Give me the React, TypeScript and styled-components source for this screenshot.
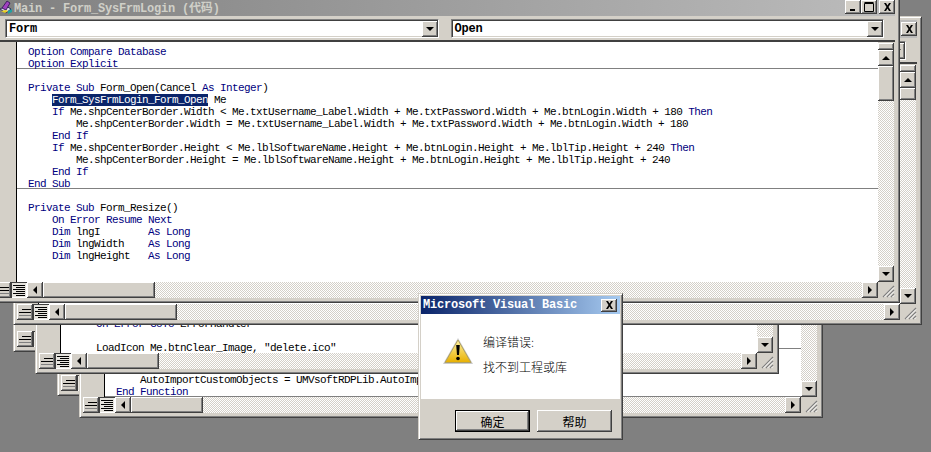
import React from 'react'
import styled, { createGlobalStyle, css } from 'styled-components'

const FACE = '#d4d0c8'
const NAVY = '#000080'
const MONO = `"Liberation Mono", "Noto Sans CJK SC", monospace`

const GlobalStyle = createGlobalStyle`
  html, body { margin: 0; padding: 0; background: #808080; }
  #root { width: 931px; height: 452px; overflow: hidden; }
`

const raised = css`
  background: ${FACE};
  box-shadow: inset -1px -1px #404040, inset 1px 1px #fff, inset -2px -2px #808080;
`
const hatch = css`
  background: repeating-conic-gradient(${FACE} 0 25%, #fff 0 50%) 0 0 / 2px 2px;
`

const Desktop = styled.div`
  position: relative;
  width: 931px;
  height: 452px;
  overflow: hidden;
  background: #808080;
`

const Win = styled.div<{ $left: number; $top: number; $width: number }>`
  position: absolute;
  left: ${p => p.$left}px;
  top: ${p => p.$top}px;
  width: ${p => p.$width}px;
  height: 309px;
  box-sizing: border-box;
  display: flex;
  flex-direction: column;
  padding: 3px 4px 4px 3px;
  background: ${FACE};
  border: 1px solid;
  border-color: ${FACE} #404040 #404040 ${FACE};
  box-shadow: inset 1px 1px #fff, inset -1px -1px #808080;
`

const TitleBar = styled.div`
  height: 18px;
  flex: none;
  display: flex;
  align-items: center;
  background: linear-gradient(90deg, #808080, #bcbcbc);
`
const TitleIcon = styled.svg`
  width: 14px;
  height: 15px;
  margin: 0 1px 0 4px;
  flex: none;
`
const TitleText = styled.span`
  flex: 1;
  font: bold 12px ${MONO};
  letter-spacing: -0.2px;
  color: #d0d0c8;
  white-space: pre;
  overflow: hidden;
`
const CapButton = styled.div<{ $gap?: number }>`
  ${raised}
  width: 16px;
  height: 14px;
  flex: none;
  margin-left: ${p => p.$gap ?? 0}px;
  display: flex;
  align-items: center;
  justify-content: center;
`

const ComboRow = styled.div`
  height: 26px;
  flex: none;
  box-sizing: border-box;
  padding: 3px 11px 0 10px;
  display: grid;
  grid-template-columns: 1fr 1fr;
  gap: 12px;
  align-items: start;
  border-bottom: 2px solid #404040;
`
const Combo = styled.div`
  height: 19px;
  box-sizing: border-box;
  display: flex;
  align-items: center;
  background: #fff;
  border: 1px solid;
  border-color: #808080 #fff #fff #808080;
  box-shadow: inset 1px 1px #404040, inset -1px -1px ${FACE};
`
const ComboText = styled.span`
  flex: 1;
  padding-left: 3px;
  font: bold 12px ${MONO};
  letter-spacing: -0.2px;
  color: #000;
`

const Pane = styled.div`
  flex: 1;
  min-height: 0;
  display: flex;
`
const Gutter = styled.div`
  width: 21px;
  flex: none;
  background: ${FACE};
  border-right: 1px solid #000;
`
const Code = styled.div<{ $end?: boolean }>`
  flex: 1;
  min-width: 0;
  overflow: hidden;
  box-sizing: border-box;
  padding-top: 3px;
  background: #fff;
  display: flex;
  flex-direction: column;
  justify-content: ${p => (p.$end ? 'flex-end' : 'flex-start')};
`
const Line = styled.div<{ $sep?: boolean }>`
  height: 12px;
  flex: none;
  box-sizing: border-box;
  padding-left: 11px;
  font: 11px/14px ${MONO};
  letter-spacing: -0.6px;
  color: #000;
  white-space: pre;
  ${p => p.$sep && 'border-bottom: 1px solid #808080;'}
`
const Keyword = styled.span`
  color: ${NAVY};
`
const Selected = styled.span`
  background: #0a246a;
  color: #fff;
`

const VBar = styled.div`
  width: 17px;
  flex: none;
  display: flex;
  flex-direction: column;
  padding-top: 1px;
  box-sizing: border-box;
  background: ${FACE};
`
const Splitter = styled.div`
  ${raised}
  width: 16px;
  height: 7px;
  flex: none;
`
const Thumb = styled.div<{ $h?: number; $w?: number }>`
  ${raised}
  flex: none;
  width: ${p => p.$w ?? 16}px;
  height: ${p => p.$h ?? 16}px;
`
const Track = styled.div`
  ${hatch}
  flex: 1;
`
const VTrack = styled(Track)`
  width: 16px;
`

const HBar = styled.div`
  height: 16px;
  flex: none;
  display: flex;
`
const ViewButton = styled.div<{ $pressed?: boolean }>`
  flex: none;
  width: 16px;
  height: 16px;
  display: flex;
  align-items: center;
  justify-content: center;
  ${p =>
    p.$pressed
      ? css`
          background: #e6e4de;
          box-shadow: inset 1px 1px #404040, inset -1px -1px #fff;
        `
      : raised}
`
const ArrowButton = styled.div`
  ${raised}
  flex: none;
  width: 16px;
  height: 16px;
  display: flex;
  align-items: center;
  justify-content: center;
`
const Triangle = styled.i<{ $dir: 'up' | 'down' | 'left' | 'right' }>`
  width: 0;
  height: 0;
  border-style: solid;
  ${p => p.$dir === 'up' && 'border-width: 0 4px 4px; border-color: transparent transparent #000;'}
  ${p => p.$dir === 'down' && 'border-width: 4px 4px 0; border-color: #000 transparent transparent;'}
  ${p => p.$dir === 'left' && 'border-width: 4px 4px 4px 0; border-color: transparent #000 transparent transparent;'}
  ${p => p.$dir === 'right' && 'border-width: 4px 0 4px 4px; border-color: transparent transparent transparent #000;'}
`
const Corner = styled.div`
  width: 17px;
  flex: none;
  display: flex;
  align-items: flex-end;
  justify-content: flex-end;
  background: ${FACE};
`

// dialog
const Dialog = styled.div`
  position: absolute;
  left: 418px;
  top: 293px;
  width: 205px;
  height: 147px;
  box-sizing: border-box;
  padding: 2px;
  display: flex;
  flex-direction: column;
  background: ${FACE};
  border: 1px solid;
  border-color: ${FACE} #404040 #404040 ${FACE};
  box-shadow: inset 1px 1px #fff, inset -1px -1px #808080;
`
const DialogTitle = styled.div`
  height: 18px;
  flex: none;
  display: flex;
  align-items: center;
  justify-content: space-between;
  padding: 0 3px 0 2px;
  background: linear-gradient(90deg, #0a246a, #a6caf0);
  font: bold 12px ${MONO};
  letter-spacing: -0.2px;
  color: #fff;
`
const DialogClose = styled(CapButton)`
  height: 13px;
`
const DialogBody = styled.div`
  height: 85px;
  flex: none;
  display: flex;
  background: #fff;
  padding: 22px 0 0 21px;
  box-sizing: border-box;
`
const WarnIcon = styled.svg`
  width: 32px;
  height: 32px;
  flex: none;
  margin-right: 9px;
`
const Message = styled.div`
  display: flex;
  flex-direction: column;
  gap: 13px;
  font: 300 12px/12px "Noto Sans CJK SC", sans-serif;
  color: #000;
`
const DialogFooter = styled.div`
  flex: 1;
  display: flex;
  justify-content: flex-end;
  align-items: flex-start;
  gap: 7px;
  padding: 11px 8px 0 0;
`
const PushButton = styled.div<{ $default?: boolean }>`
  ${raised}
  width: 75px;
  height: 22px;
  box-sizing: border-box;
  display: flex;
  align-items: center;
  justify-content: center;
  font: 12px "Noto Sans CJK SC", sans-serif;
  color: #000;
  ${p => p.$default && 'border: 1px solid #000;'}
`

const KEYWORDS = /\b(Option|Compare|Database|Explicit|Private|Public|Sub|Function|As|Integer|Long|If|Then|End|On|Error|GoTo|Resume|Next|Dim)\b/
const SELECTION = 'Form_SysFrmLogin_Form_Open'

type CodeLine = { text: string; sep?: boolean }

const CodeText: React.FC<{ text: string }> = ({ text }) => {
  const sel = text.indexOf(SELECTION)
  if (sel >= 0) {
    return (
      <>
        {text.slice(0, sel)}
        <Selected>{SELECTION}</Selected>
        {text.slice(sel + SELECTION.length)}
      </>
    )
  }
  return (
    <>
      {text.split(KEYWORDS).map((part, i) => (i % 2 ? <Keyword key={i}>{part}</Keyword> : part))}
    </>
  )
}

const Close: React.FC = () => (
  <svg width="9" height="8" viewBox="0 0 9 8">
    <path d="M1 0h2l1.500 2.500L6 0h2L5.500 4 8 8H6L4.500 5.500 3 8H1l2.500-4z" fill="#000" />
  </svg>
)

const ProcIcon: React.FC = () => (
  <svg width="12" height="10" viewBox="0 0 12 10">
    <path d="M3 2.500h9M0 5.500h12" stroke="#000" fill="none" />
    <path d="M0 8.500h12" stroke="#808080" fill="none" />
  </svg>
)

const ModuleIcon: React.FC = () => (
  <svg width="12" height="11" viewBox="0 0 12 11">
    <path d="M0 .500h12M3 2.500h9M0 4.500h12M3 6.500h9M0 8.500h12M3 10.500h9" stroke="#000" fill="none" />
  </svg>
)

const Grip: React.FC = () => (
  <svg width="13" height="13" viewBox="0 0 13 13">
    <path d="M12 1 1 12M12 5 5 12M12 9 9 12" stroke="#808080" strokeWidth="1.200" fill="none" />
    <path d="M12 2.500 2.500 12M12 6.500 6.500 12M12 10.500 10.500 12" stroke="#fff" fill="none" />
  </svg>
)

type WindowProps = {
  left: number
  top: number
  width: number
  lines: CodeLine[]
  title?: string
  thumb?: number
  hthumb?: number
  left_combo?: string
  right_combo?: string
  end?: boolean
}

const CodeWindow: React.FC<WindowProps> = ({ left, top, width, lines, title = '', thumb = 35, hthumb = 112, left_combo = '', right_combo = '', end }) => (
  <Win $left={left} $top={top} $width={width}>
    <TitleBar>
      <TitleIcon viewBox="0 0 14 15">
        <path d="M1 9l6-3 5 3-5 4z" fill="#d8d8e8" stroke="#303060" />
        <path d="M3 8l5-7 3 2-4 7z" fill="#a040c0" stroke="#402060" />
        <path d="M2 11l4 2 3-2-2-1z" fill="#e8d020" />
        <path d="M9 11l4-2v3l-4 2z" fill="#20a0a0" />
      </TitleIcon>
      <TitleText>{title}</TitleText>
      <CapButton>
        <svg width="8" height="8" viewBox="0 0 8 8"><path d="M1 6h5v2H1z" fill="#000" /></svg>
      </CapButton>
      <CapButton>
        <svg width="10" height="10" viewBox="0 0 10 10"><path d="M.5 1.500h9v8h-9z M.5 .500h9" stroke="#000" fill="none" /></svg>
      </CapButton>
      <CapButton $gap={2}>
        <Close />
      </CapButton>
    </TitleBar>
    <ComboRow>
      <Combo>
        <ComboText>{left_combo}</ComboText>
        <ArrowButton><Triangle $dir="down" /></ArrowButton>
      </Combo>
      <Combo>
        <ComboText>{right_combo}</ComboText>
        <ArrowButton><Triangle $dir="down" /></ArrowButton>
      </Combo>
    </ComboRow>
    <Pane>
      <Gutter />
      <Code $end={end}>
        {lines.map((l, i) => (
          <Line key={i} $sep={l.sep}>
            <CodeText text={l.text} />
          </Line>
        ))}
      </Code>
      <VBar>
        <Splitter />
        <ArrowButton><Triangle $dir="up" /></ArrowButton>
        <Thumb $h={thumb} />
        <VTrack />
        <ArrowButton><Triangle $dir="down" /></ArrowButton>
      </VBar>
    </Pane>
    <HBar>
      <ViewButton><ProcIcon /></ViewButton>
      <ViewButton $pressed><ModuleIcon /></ViewButton>
      <ArrowButton><Triangle $dir="left" /></ArrowButton>
      <Thumb $w={hthumb} />
      <Track />
      <ArrowButton><Triangle $dir="right" /></ArrowButton>
      <Corner><Grip /></Corner>
    </HBar>
  </Win>
)

const LOGIN_LINES: CodeLine[] = [
  { text: 'Option Compare Database' },
  { text: 'Option Explicit', sep: true },
  { text: '' },
  { text: 'Private Sub Form_Open(Cancel As Integer)' },
  { text: '    Form_SysFrmLogin_Form_Open Me' },
  { text: '    If Me.shpCenterBorder.Width < Me.txtUsername_Label.Width + Me.txtPassword.Width + Me.btnLogin.Width + 180 Then' },
  { text: '        Me.shpCenterBorder.Width = Me.txtUsername_Label.Width + Me.txtPassword.Width + Me.btnLogin.Width + 180' },
  { text: '    End If' },
  { text: '    If Me.shpCenterBorder.Height < Me.lblSoftwareName.Height + Me.btnLogin.Height + Me.lblTip.Height + 240 Then' },
  { text: '        Me.shpCenterBorder.Height = Me.lblSoftwareName.Height + Me.btnLogin.Height + Me.lblTip.Height + 240' },
  { text: '    End If' },
  { text: 'End Sub', sep: true },
  { text: '' },
  { text: 'Private Sub Form_Resize()' },
  { text: '    On Error Resume Next' },
  { text: '    Dim lngI        As Long' },
  { text: '    Dim lngWidth    As Long' },
  { text: '    Dim lngHeight   As Long' },
]

const CLEAR_LINES: CodeLine[] = [
  { text: '    On Error GoTo ErrorHandler' },
  { text: '' },
  { text: '    LoadIcon Me.btnClear_Image, "delete.ico"' },
]

const IMPORT_LINES: CodeLine[] = [
  { text: 'End Sub', sep: true },
  { text: '' },
  { text: 'Public Function AutoImportCustomObjects() As Boolean' },
  { text: '    AutoImportCustomObjects = UMVsoftRDPLib.AutoImportCustomObjects' },
  { text: 'End Function', sep: true },
]

export default function App() {
  return (
    <Desktop>
      <GlobalStyle />
      <CodeWindow left={57} top={87} width={744} lines={[]} hthumb={72} />
      <CodeWindow left={13} top={43} width={744} lines={[]} hthumb={72} />
      <CodeWindow left={79} top={109} width={744} lines={IMPORT_LINES} hthumb={72} end />
      <CodeWindow left={35} top={65} width={744} lines={CLEAR_LINES} hthumb={72} end />
      <CodeWindow left={13} top={16} width={909} lines={[]} thumb={12} left_combo="Form" right_combo="Open" />
      <CodeWindow
        left={-9}
        top={-6}
        width={909}
        lines={LOGIN_LINES}
        title="Main - Form_SysFrmLogin (代码)"
        left_combo="Form"
        right_combo="Open"
      />
      <Dialog>
        <DialogTitle>
          Microsoft Visual Basic
          <DialogClose><Close /></DialogClose>
        </DialogTitle>
        <DialogBody>
          <WarnIcon viewBox="0 0 32 32">
            <defs>
              <linearGradient id="warn" x1="0" y1="0" x2="0" y2="1">
                <stop offset="0" stopColor="#fff2a0" />
                <stop offset="1" stopColor="#e8b000" />
              </linearGradient>
            </defs>
            <path d="M16 2 31 28H1z" fill="#a8a8a8" opacity="0.6" />
            <path d="M16 4 29 26.500H3z" fill="url(#warn)" stroke="#b0a060" strokeLinejoin="round" />
            <path d="M14.200 9h3.600l-.8 10h-2z" fill="#000" />
            <circle cx="16" cy="22.500" r="1.800" fill="#000" />
          </WarnIcon>
          <Message>
            <span>编译错误:</span>
            <span>找不到工程或库</span>
          </Message>
        </DialogBody>
        <DialogFooter>
          <PushButton $default>确定</PushButton>
          <PushButton>帮助</PushButton>
        </DialogFooter>
      </Dialog>
    </Desktop>
  )
}
